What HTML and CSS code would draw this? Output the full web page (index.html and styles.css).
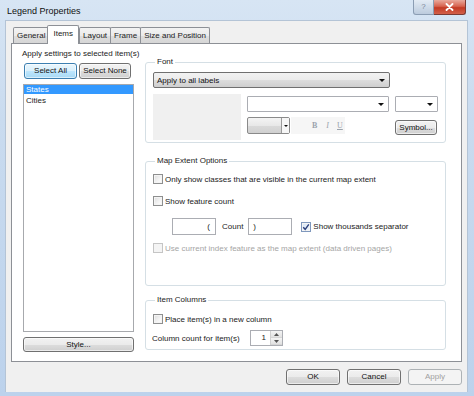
FILE: index.html
```html
<!DOCTYPE html>
<html>
<head>
<meta charset="utf-8">
<link rel="stylesheet" href="styles.css">
</head>
<body>
<div class="window">
  <div class="titlebar">
    <span class="title">Legend Properties</span>
    <div class="caption-btns">
      <div class="cap-help">?</div>
      <div class="cap-close">
        <svg width="9" height="8" viewBox="0 0 9 8"><path d="M1.5 1 L7.5 7 M7.5 1 L1.5 7" stroke="#fff" stroke-width="1.8" stroke-linecap="round"/></svg>
      </div>
    </div>
  </div>
  <div class="client">
    <div class="tabs">
      <div class="tab">General</div>
      <div class="tab active">Items</div>
      <div class="tab">Layout</div>
      <div class="tab">Frame</div>
      <div class="tab">Size and Position</div>
    </div>
    <div class="panel">
      <div class="leftcol">
        <div class="lbl">Apply settings to selected item(s)</div>
        <div class="selrow">
          <div class="btn focus sel-all">Select All</div>
          <div class="btn sel-none">Select None</div>
        </div>
        <div class="listbox">
          <div class="li selected">States</div>
          <div class="li">Cities</div>
        </div>
        <div class="btn style-btn">Style...</div>
      </div>
      <div class="rightcol">
        <fieldset class="group g-font">
          <legend>Font</legend>
          <div class="combo-btn"><span>Apply to all labels</span><span class="arrow"></span></div>
          <div class="fontrow">
            <div class="preview"></div>
            <div class="fontctrls">
              <div class="fc-row1">
                <div class="combo w-font"><span class="arrow"></span></div>
                <div class="combo w-size"><span class="arrow"></span></div>
              </div>
              <div class="fc-row2">
                <div class="colorbtn"><span class="cb-face"></span><span class="cb-drop"><span class="arrow"></span></span></div>
                <div class="biu">
                  <span class="fb">B</span>
                  <span class="fi">I</span>
                  <span class="fu">U</span>
                </div>
                <div class="btn symbol">Symbol...</div>
              </div>
            </div>
          </div>
        </fieldset>
        <fieldset class="group g-extent">
          <legend>Map Extent Options</legend>
          <div class="chk-row r1"><span class="chk"></span><span>Only show classes that are visible in the current map extent</span></div>
          <div class="chk-row r2"><span class="chk"></span><span>Show feature count</span></div>
          <div class="count-row">
            <div class="tbox tb-left">(</div>
            <span class="count-lbl">Count</span>
            <div class="tbox tb-right">)</div>
            <div class="chk-row inline"><span class="chk checked"><svg width="8" height="8" viewBox="0 0 8 8"><path d="M1.2 4.2 L3.2 6.3 L6.8 1.3" fill="none" stroke="#2b3f7a" stroke-width="1.4"/></svg></span><span>Show thousands separator</span></div>
          </div>
          <div class="chk-row r4 disabled"><span class="chk"></span><span>Use current index feature as the map extent (data driven pages)</span></div>
        </fieldset>
        <fieldset class="group g-cols">
          <legend>Item Columns</legend>
          <div class="chk-row c1"><span class="chk"></span><span>Place item(s) in a new column</span></div>
          <div class="colcount">
            <span class="cc-lbl">Column count for item(s)</span>
            <div class="spin">
              <span class="spin-val">1</span>
              <span class="spin-btns">
                <span class="sb"><svg width="5" height="3" viewBox="0 0 5 3"><path d="M0 3 L2.5 0 L5 3Z" fill="#555"/></svg></span>
                <span class="sb"><svg width="5" height="3" viewBox="0 0 5 3"><path d="M0 0 L2.5 3 L5 0Z" fill="#555"/></svg></span>
              </span>
            </div>
          </div>
        </fieldset>
      </div>
    </div>
    <div class="footer">
      <div class="btn fbtn">OK</div>
      <div class="btn fbtn">Cancel</div>
      <div class="btn fbtn disabled-btn">Apply</div>
    </div>
  </div>
</div>
</body>
</html>
```

FILE: styles.css
```css
* { box-sizing: border-box; }
html, body { margin: 0; padding: 0; }
body {
  width: 474px;
  height: 396px;
  overflow: hidden;
  font-family: "Liberation Sans", Arial, sans-serif;
  font-size: 8px;
  color: #222;
  white-space: nowrap;
}
.window {
  width: 474px;
  height: 396px;
  display: flex;
  flex-direction: column;
  background: linear-gradient(180deg, #d7e5f4 0%, #c9dbef 30%, #bcd2ec 100%);
  padding: 0 6px 4px 5px;
}
.titlebar {
  height: 20px;
  display: flex;
  align-items: flex-start;
  justify-content: space-between;
  flex: none;
}
.title {
  font-size: 9px;
  line-height: 10px;
  margin-top: 6px;
  margin-left: 2px;
  color: #111;
}
.caption-btns {
  display: flex;
  margin-right: 2px;
}
.cap-help {
  width: 21px;
  height: 15px;
  border: 1px solid #8b9db3;
  border-top: none;
  border-radius: 0 0 0 3px;
  background: linear-gradient(180deg, #e3ebf4 0%, #cfdbe9 50%, #bccbdd 100%);
  color: #7a8798;
  font-size: 8px;
  text-align: center;
  line-height: 14px;
}
.cap-close {
  width: 32px;
  height: 15px;
  border: 1px solid #7b3a33;
  border-left: none;
  border-top: none;
  border-radius: 0 0 3px 0;
  background: linear-gradient(180deg, #e9a99c 0%, #d7634f 45%, #c33a24 55%, #d2604a 100%);
  display: flex;
  align-items: center;
  justify-content: center;
}
.client {
  flex: 1;
  background: #f0f0f0;
  padding: 6px 5px 0 5px;
  display: flex;
  flex-direction: column;
  border: 1px solid #b4c4d6;
  border-bottom: none;
}
.tabs {
  display: flex;
  height: 16px;
  padding-left: 2px;
  position: relative;
  z-index: 2;
  align-items: flex-end;
}
.tab {
  height: 16px;
  padding: 0 3px;
  border: 1px solid #8d9096;
  border-bottom: none;
  margin-right: -1px;
  background: linear-gradient(180deg, #f3f3f3 0%, #ebebeb 50%, #dedede 51%, #d6d6d6 100%);
  line-height: 15px;
  border-radius: 2px 2px 0 0;
  color: #222;
}
.tab.active {
  height: 19px;
  margin-bottom: -1px;
  margin-left: -1px;
  margin-right: 0;
  padding: 0 5px;
  background: #fff;
  line-height: 15px;
  position: relative;
}
.panel {
  height: 319px;
  background: #fff;
  border: 1px solid #8d9096;
  display: flex;
  padding: 4px 16px 9px 11px;
  flex: none;
}
.leftcol {
  width: 111px;
  flex: none;
  display: flex;
  flex-direction: column;
}
.lbl {
  height: 11px;
  line-height: 11px;
  color: #222;
  margin-left: -1px;
}
.selrow {
  display: flex;
  margin-top: 4px;
  padding-left: 1px;
  gap: 2px;
}
.btn {
  border: 1px solid #707070;
  border-radius: 3px;
  background: linear-gradient(180deg, #f2f2f2 0%, #ebebeb 50%, #dddddd 51%, #cfcfcf 100%);
  text-align: center;
  color: #111;
  box-shadow: inset 0 0 0 1px rgba(255,255,255,0.6);
}
.btn.focus {
  border-color: #3c7fb1;
  background: linear-gradient(180deg, #eaf6fd 0%, #d9f0fc 50%, #bee6fd 51%, #a7d9f5 100%);
}
.sel-all { width: 53px; height: 16px; line-height: 14px; }
.sel-none { width: 52px; height: 16px; line-height: 14px; }
.listbox {
  margin-top: 5px;
  flex: 1;
  border: 1px solid #a7a9ad;
  padding: 0;
}
.li {
  height: 9px;
  line-height: 9px;
  padding-left: 2px;
  color: #222;
}
.li.selected {
  background: #3399ff;
  color: #fff;
}
.li + .li { margin-top: 1px; height: 11px; line-height: 11px; }
.style-btn {
  margin-top: 5px;
  height: 15px;
  line-height: 13px;
}
.rightcol {
  width: 301px;
  flex: none;
  margin-left: 11px;
  display: flex;
  flex-direction: column;
}
.group {
  margin: 0;
  min-width: 0;
  border: 1px solid #d5dfe5;
  border-radius: 3px;
  padding: 0 7px;
}
.group legend {
  padding: 0 2px;
  margin-left: 2px;
  line-height: 10px;
  height: 10px;
  color: #222;
}
.g-font {
  margin-top: 9px;
  height: 86px;
  padding-top: 5px;
}
.combo-btn {
  width: 237px;
  height: 16px;
  border: 1px solid #707070;
  border-radius: 2px;
  background: linear-gradient(180deg, #f2f2f2 0%, #ebebeb 50%, #dddddd 51%, #cfcfcf 100%);
  display: flex;
  align-items: center;
  justify-content: space-between;
  padding: 0 4px 0 3px;
  color: #111;
}
.arrow {
  width: 0;
  height: 0;
  border-left: 3px solid transparent;
  border-right: 3px solid transparent;
  border-top: 3px solid #111;
  display: inline-block;
}
.fontrow {
  display: flex;
  margin-top: 6px;
}
.preview {
  width: 88px;
  height: 46px;
  background: #f0f0f0;
}
.fontctrls {
  margin-left: 6px;
  padding-top: 2px;
  width: 191px;
}
.fc-row1 {
  display: flex;
  gap: 6px;
}
.combo {
  height: 16px;
  border: 1px solid #abadb3;
  border-radius: 1px;
  background: #fff;
  display: flex;
  align-items: center;
  justify-content: flex-end;
  padding-right: 4px;
}
.w-font { width: 142px; }
.w-size { width: 43px; }
.fc-row2 {
  display: flex;
  margin-top: 5px;
  align-items: flex-start;
}
.colorbtn {
  width: 43px;
  height: 17px;
  border: 1px solid #8a8a8a;
  border-radius: 2px;
  display: flex;
  background: linear-gradient(180deg, #f4f4f4 0%, #e8e8e8 50%, #dadada 51%, #d0d0d0 100%);
}
.cb-face { flex: 1; }
.cb-drop {
  width: 8px;
  border-left: 1px solid #9a9a9a;
  display: flex;
  align-items: center;
  justify-content: center;
  background: #f6f6f6;
}
.cb-drop .arrow { border-left-width: 2px; border-right-width: 2px; border-top-width: 2px; }
.biu {
  display: flex;
  width: 54px;
  height: 17px;
  background: #f6f6f6;
  margin-left: 1px;
  align-items: center;
  color: #9aa3ad;
  font-family: "Liberation Serif", serif;
  font-size: 8px;
}
.fb { font-weight: bold; margin-left: 21px; }
.fi { font-style: italic; margin-left: 9px; }
.fu { text-decoration: underline; margin-left: 8px; }
.symbol {
  margin-left: 50px;
  margin-top: 3px;
  width: 42px;
  height: 15px;
  line-height: 13px;
}
.g-extent {
  margin-top: 13px;
  height: 130px;
  padding-top: 7px;
}
.chk-row {
  display: flex;
  align-items: center;
  height: 12px;
  color: #222;
}
.chk {
  width: 10px;
  height: 10px;
  border: 1px solid #8e8f8f;
  background: linear-gradient(135deg, #dcdcdc 0%, #f4f4f4 60%, #fff 100%);
  box-shadow: inset 0 0 0 1px #f4f4f4;
  margin-right: 2px;
  flex: none;
  display: flex;
  align-items: center;
  justify-content: center;
}
.chk.checked {
  background: linear-gradient(135deg, #d8e6f5 0%, #eef4fb 100%);
  border-color: #7f98bd;
}
.r2 { margin-top: 10px; }
.count-row {
  display: flex;
  align-items: center;
  margin-top: 11px;
  margin-left: 19px;
  height: 17px;
}
.tbox {
  width: 44px;
  height: 17px;
  border: 1px solid #abadb3;
  background: #fff;
  line-height: 15px;
  color: #222;
}
.tb-left { text-align: right; padding-right: 5px; }
.tb-right { padding-left: 4px; }
.count-lbl { margin: 0 5px 0 6px; }
.chk-row.inline { margin-left: 9px; }
.r4 { margin-top: 7px; }
.disabled { color: #a5a5a5; }
.disabled .chk {
  border-color: #c5c5c5;
  background: #f4f4f4;
}
.g-cols {
  margin-top: 9px;
  height: 55px;
  padding-top: 8px;
}
.colcount {
  display: flex;
  align-items: center;
  margin-top: 5px;
  height: 16px;
  margin-left: -1px;
}
.cc-lbl { width: 98px; color: #222; }
.spin {
  width: 33px;
  height: 16px;
  border: 1px solid #abadb3;
  display: flex;
  background: #fff;
}
.spin-val {
  flex: 1;
  text-align: right;
  padding-right: 4px;
  line-height: 14px;
}
.spin-btns {
  width: 12px;
  display: flex;
  flex-direction: column;
  border-left: 1px solid #d0d0d0;
}
.sb {
  flex: 1;
  display: flex;
  align-items: center;
  justify-content: center;
  background: linear-gradient(180deg, #f4f4f4, #e2e2e2);
  border-bottom: 1px solid #d6d6d6;
}
.footer {
  display: flex;
  justify-content: flex-end;
  gap: 7px;
  margin-top: 7px;
}
.fbtn {
  width: 54px;
  height: 16px;
  line-height: 14px;
}
.disabled-btn {
  border-color: #adb2b5;
  background: #f4f4f4;
  color: #a0a0a0;
  box-shadow: none;
}
```
